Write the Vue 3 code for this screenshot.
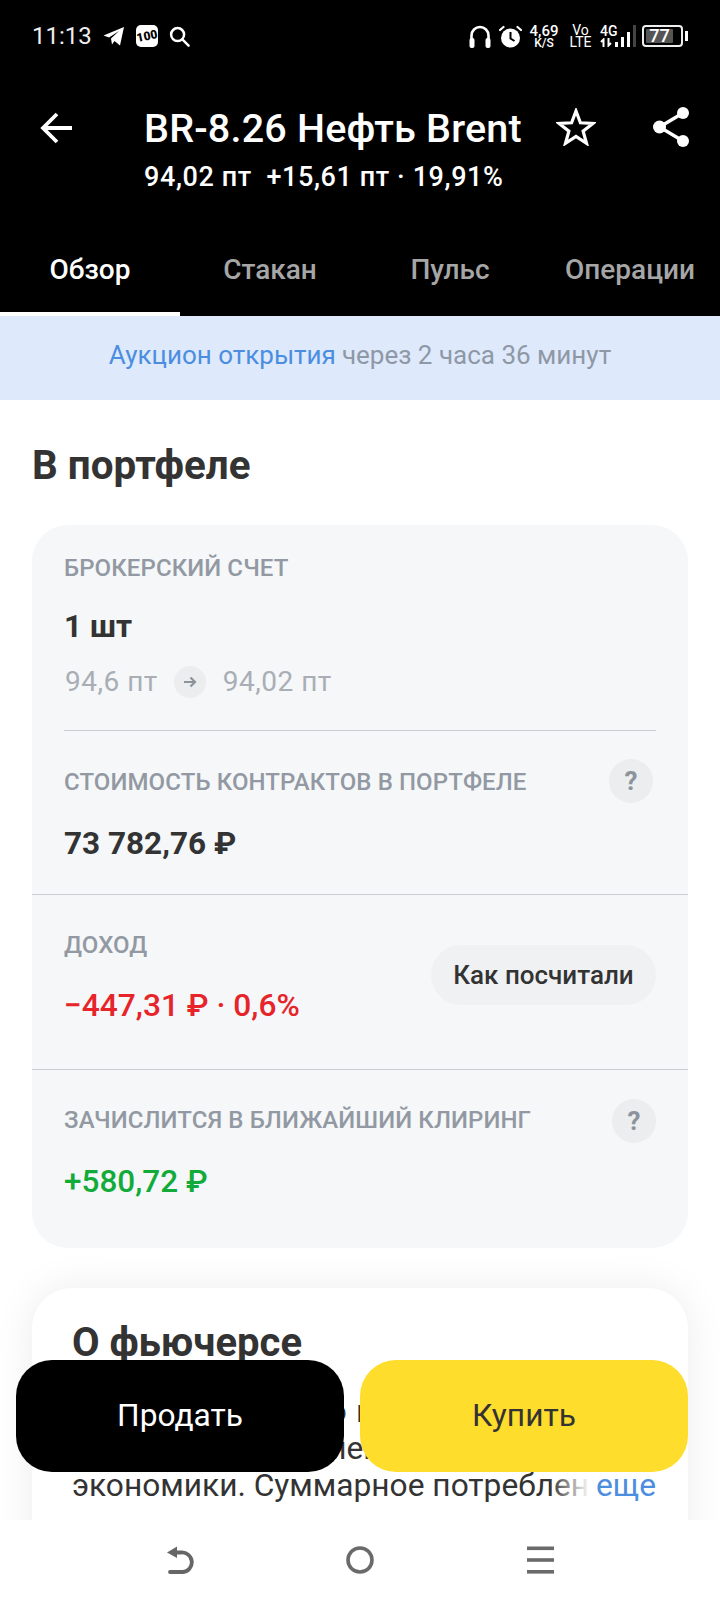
<template>
  <div class="screen">
    <div class="top">
      <div class="status">
        <div class="status-left">
          <span class="time">11:13</span>
          <svg class="ic" width="22" height="20" viewBox="0 0 22 20"><path d="M0.5 9.500 21 1 17 19.500 11.500 15 9 18.500 8 12.500 16 5 6 11.500Z" fill="#fff"/></svg>
          <span class="app100"><span>100</span></span>
          <svg class="ic" width="21" height="21" viewBox="0 0 22 22" fill="none" stroke="#fff" stroke-width="2.600"><circle cx="9" cy="9" r="6.800"/><path d="M14 14 20.500 20.500" stroke-linecap="round"/></svg>
        </div>
        <div class="status-right">
          <svg class="hp" width="22" height="23" viewBox="0 0 22 23" fill="none"><path d="M2.500 14V10.500a8.500 8.500 0 0 1 17 0V14" stroke="#fff" stroke-width="2.600"/><rect x="0.500" y="13" width="5" height="10" rx="2" fill="#fff"/><rect x="16.500" y="13" width="5" height="10" rx="2" fill="#fff"/></svg>
          <svg class="alarm" width="23" height="23" viewBox="0 0 23 23"><circle cx="11.500" cy="13" r="9.500" fill="#fff"/><path d="M11.500 7v6.500l4 2.500" fill="none" stroke="#000" stroke-width="2"/><path d="M1 5 4.500 2M22 5 18.500 2" stroke="#fff" stroke-width="2.200" stroke-linecap="round"/></svg>
          <div class="speed"><b>4,69</b><i>K/S</i></div>
          <div class="volte"><span>Vo</span><span>LTE</span></div>
          <div class="net-text">
            <span>4G</span>
            <svg width="13" height="9" viewBox="0 0 13 9" fill="none" stroke="#fff" stroke-width="2"><path d="M3.500 9V1.500L1 4M8.500 0V7.500L11 5"/></svg>
          </div>
          <div class="bars"><em class="b1"></em><em class="b2"></em><em class="b3"></em><em class="b4"></em></div>
          <div class="battery"><span class="fill">77</span></div>
          <div class="nub"></div>
        </div>
      </div>

      <div class="head">
        <svg class="back" width="32" height="32" viewBox="0 0 32 32" fill="none" stroke="#fff" stroke-width="3.800"><path d="M2.500 16H32M17 2 3 16 17 30"/></svg>
        <div class="head-text">
          <div class="title">BR-8.26 Нефть Brent</div>
          <div class="sub">94,02 пт&nbsp; +15,61 пт · 19,91%</div>
        </div>
        <svg class="star" width="40" height="38" viewBox="0 0 40 38" fill="none" stroke="#fff" stroke-width="3.200" stroke-linejoin="miter"><path d="M20 3 24.400 14.800 37 15.400 27.100 23.200 30.500 35.300 20 28.400 9.500 35.300 12.900 23.200 3 15.400 15.600 14.800Z"/></svg>
        <svg class="share" width="36" height="40" viewBox="0 0 36 40" fill="#fff"><circle cx="30" cy="6" r="6"/><circle cx="6.500" cy="20" r="6.500"/><circle cx="30" cy="34" r="6"/><path d="M30 6 6.500 20 30 34" fill="none" stroke="#fff" stroke-width="3.400"/></svg>
      </div>

      <div class="tabs">
        <div v-for="(t, i) in tabs" :key="t" class="tab" :class="{ active: i === 0 }">{{ t }}</div>
      </div>
    </div>

    <div class="banner"><span class="link">Аукцион открытия</span> через 2 часа 36 минут</div>

    <div class="content">
      <h2 class="section">В портфеле</h2>

      <div class="card">
        <div class="block first">
          <div class="label">БРОКЕРСКИЙ СЧЕТ</div>
          <div class="value qty">1 шт</div>
          <div class="prices">
            <span>94,6 пт</span>
            <span class="arrow">
              <svg width="14" height="12" viewBox="0 0 14 12" fill="none" stroke="#8c939b" stroke-width="2.200"><path d="M1 6H12M7.500 1.500 12 6 7.500 10.500"/></svg>
            </span>
            <span>94,02 пт</span>
          </div>
        </div>
        <div class="line inset"></div>
        <div class="block cost">
          <div class="label-row">
            <div class="label">СТОИМОСТЬ КОНТРАКТОВ В ПОРТФЕЛЕ</div>
            <span class="help">?</span>
          </div>
          <div class="value">73 782,76 ₽</div>
        </div>
        <div class="line"></div>
        <div class="block income">
          <div>
            <div class="label">ДОХОД</div>
            <div class="value red">−447,31 ₽ · 0,6%</div>
          </div>
          <div class="how">Как посчитали</div>
        </div>
        <div class="line"></div>
        <div class="block clearing">
          <div class="label-row">
            <div class="label">ЗАЧИСЛИТСЯ В БЛИЖАЙШИЙ КЛИРИНГ</div>
            <span class="help">?</span>
          </div>
          <div class="value green">+580,72 ₽</div>
        </div>
      </div>

      <div class="about">
        <h3 class="about-title">О фьючерсе</h3>
        <div class="about-text">
          <p class="line-one">Нефть Brent — это важнейший ресурс</p>
          <p>сырье для современной мировой</p>
          <p class="last">экономики. Суммарное потребление<span class="fade"></span><span class="more">еще</span></p>
        </div>
      </div>
    </div>

    <div class="actions">
      <div class="btn sell">Продать</div>
      <div class="btn buy">Купить</div>
    </div>

    <div class="navbar">
      <svg width="27" height="28" viewBox="0 0 27 28" fill="none" stroke="#666" stroke-width="3.800"><path d="M6 6.500H14A9.800 9.800 0 0 1 16 26H3" stroke-linecap="round"/><path d="M0 6.500 10 0.500V12Z" fill="#666" stroke="none"/></svg>
      <svg width="28" height="28" viewBox="0 0 28 28" fill="none" stroke="#6a6a6a" stroke-width="3.600"><circle cx="14" cy="14" r="12"/></svg>
      <svg width="27" height="28" viewBox="0 0 27 28" fill="#6a6a6a"><rect y="0.500" width="27" height="3.600"/><rect y="12.200" width="27" height="3.600"/><rect y="24" width="27" height="3.600"/></svg>
    </div>
  </div>
</template>

<script setup>
const tabs = ['Обзор', 'Стакан', 'Пульс', 'Операции']
</script>

<style>
html, body { margin: 0; background: #fff; }
</style>

<style scoped>
.screen {
  position: relative;
  width: 720px;
  height: 1600px;
  overflow: hidden;
  background: #fff;
  font-family: Roboto, "Noto Sans", sans-serif;
  color: #333;
}

/* шапка */
.top { background: #000; color: #fff; height: 316px; display: flex; flex-direction: column; }
.status { height: 72px; display: flex; justify-content: space-between; align-items: center; padding: 0 32px; }
.status-left, .status-right { display: flex; align-items: center; }
.status-left { gap: 11px; }
.time { font-size: 24px; color: #eee; }
.app100 {
  width: 22px; height: 22px; border-radius: 5px; background: #fff; color: #000;
  font-size: 12px; font-weight: 900; line-height: 22px; text-align: center;
}
.app100 span { display: block; transform: rotate(-12deg); }
.hp { margin-right: 8px; }
.alarm { margin-right: 7px; }
.speed { display: flex; flex-direction: column; align-items: center; width: 30px; margin-right: 11px; line-height: 11px; }
.speed b { font-size: 15px; font-weight: 500; line-height: 14px; }
.speed i { font-size: 12px; font-style: normal; font-weight: 500; }
.volte { display: flex; flex-direction: column; font-size: 14px; line-height: 12px; align-items: center; width: 21px; margin-right: 9px; }
.net-text { display: flex; flex-direction: column; gap: 1px; font-size: 14px; font-weight: 500; line-height: 12px; width: 17px; white-space: nowrap; }
.bars { display: flex; align-items: flex-end; gap: 3px; height: 22px; margin-left: -2px; }
.bars em { width: 3px; background: #fff; display: block; }
.bars .b1 { height: 5px; } .bars .b2 { height: 10px; } .bars .b3 { height: 15px; }
.bars .b4 { height: 22px; background: #444; }
.battery { width: 41px; height: 22px; border: 2px solid #eee; border-radius: 4px; padding: 2px; margin-left: 6px; box-sizing: border-box; display: flex; }
.fill { width: 27px; background: #555; color: #fff; font-size: 18px; font-weight: 500; line-height: 14px; text-align: center; border-radius: 1px; }
.nub { width: 3px; height: 10px; background: #fff; margin-left: 2px; }

.head { display: flex; align-items: flex-start; padding: 25px 0 0 40px; height: 114px; box-sizing: content-box; }
.back { margin-top: 15px; flex: none; }
.head-text { margin-left: 72px; width: 413px; flex: none; }
.title { font-size: 39.5px; font-weight: 500; line-height: 64px; white-space: nowrap; letter-spacing: 0.2px; }
.sub { font-size: 27px; font-weight: 500; line-height: 34px; white-space: nowrap; margin-top: -1px; letter-spacing: .6px; }
.star { margin-top: 11px; margin-left: -1px; flex: none; }
.share { margin-top: 10px; margin-left: 57px; flex: none; }

.tabs { display: flex; margin-top: auto; height: 76px; }
.tab { flex: 1; text-align: center; font-size: 28px; font-weight: 500; line-height: 60px; color: #a6a6a6; white-space: nowrap; }
.tab.active { color: #fff; border-bottom: 4px solid #fff; }

.banner { height: 84px; box-sizing: border-box; padding-bottom: 6px; background: #dee9fc; display: flex; align-items: center; justify-content: center; gap: 6px; font-size: 26px; color: #8f98a5; }
.link { color: #4b8ee0; }

.content { padding: 0 32px; }
.section { margin: 40px 0 0; font-size: 40.4px; line-height: 52px; font-weight: 700; color: #333; }

.card { margin-top: 33px; background: #f5f7f9; border-radius: 36px; height: 723px; }
.block { padding: 0 32px; }
.block.first { padding-top: 29px; height: 176px; }
.label { font-size: 24px; font-weight: 500; line-height: 28px; color: #9299a2; white-space: nowrap; letter-spacing: .1px; }
.value { font-size: 31.5px; font-weight: 700; line-height: 40px; color: #333; margin-top: 29px; white-space: nowrap; }
.qty { margin-top: 25px; }
.prices { display: flex; align-items: center; font-size: 28px; color: #a9aeb5; margin-top: 17px; margin-left: 1px; line-height: 36px; letter-spacing: .5px; }
.arrow { width: 32px; height: 32px; border-radius: 50%; background: #ebedef; display: flex; align-items: center; justify-content: center; margin: 0 17px 0 16px; }

.line { height: 1px; background: #c9ced3; }
.line.inset { margin: 0 32px; }
.block.cost { height: 163px; box-sizing: border-box; padding-top: 28px; }
.cost .label { margin-top: 2px; }
.cost .help { margin-right: 3px; }
.label-row { display: flex; align-items: center; justify-content: space-between; height: 44px; }
.help {
  width: 44px; height: 44px; border-radius: 50%; background: #ebedef; color: #8c939b;
  font-size: 26px; font-weight: 700; line-height: 44px; text-align: center;
}
.cost .value { margin-top: 21px; }
.block.income { height: 174px; box-sizing: border-box; display: flex; justify-content: space-between; align-items: flex-start; padding-top: 36px; }
.income .value { margin-top: 27px; font-size: 31.7px; font-weight: 500; }
.red { color: #e6242a; }
.green { color: #12ab3a; font-weight: 500; }
.how {
  height: 60px; width: 225px; margin-top: 14px; border-radius: 30px; background: #eff1f3; color: #333;
  font-size: 26px; font-weight: 500; line-height: 60px; text-align: center; white-space: nowrap;
}
.block.clearing { box-sizing: border-box; padding-top: 29px; }
.clearing .label { margin-bottom: 2px; }
.clearing .value { margin-top: 19px; }

/* блок о фьючерсе — низ перекрыт кнопками и навбаром */
.about {
  margin-top: 40px; background: #fff; border-radius: 40px; padding: 30px 40px 0;
  box-shadow: 0 0 40px rgba(0, 0, 0, .08); height: 300px;
}
.about-title { margin: 0; font-size: 40px; line-height: 50px; font-weight: 700; color: #333; }
.about-text { margin-top: 25px; font-size: 31.7px; line-height: 37px; color: #333; }
.about-text p { margin: 0; white-space: nowrap; position: relative; }
.line-one { letter-spacing: .6px; }
.last { width: 584px; overflow: hidden; }
.fade { position: absolute; right: 66px; top: 0; width: 40px; height: 37px; background: linear-gradient(90deg, rgba(255,255,255,0), #fff); }
.more { position: absolute; right: 0; top: 0; width: 66px; background: #fff; text-align: right; color: #4b8ee0; }

.actions { position: absolute; left: 16px; right: 32px; top: 1360px; display: flex; gap: 16px; }
.btn { flex: 1; height: 112px; border-radius: 36px; text-align: center; font-size: 31.7px; line-height: 112px; }
.sell { background: #000; color: #fff; }
.buy { background: #ffdd2d; color: #333; }

.navbar { position: absolute; left: 0; right: 0; bottom: 0; height: 80px; background: #fff; display: grid; grid-template-columns: repeat(3, 180px); justify-items: center; align-items: center; padding: 0 90px; }
</style>
